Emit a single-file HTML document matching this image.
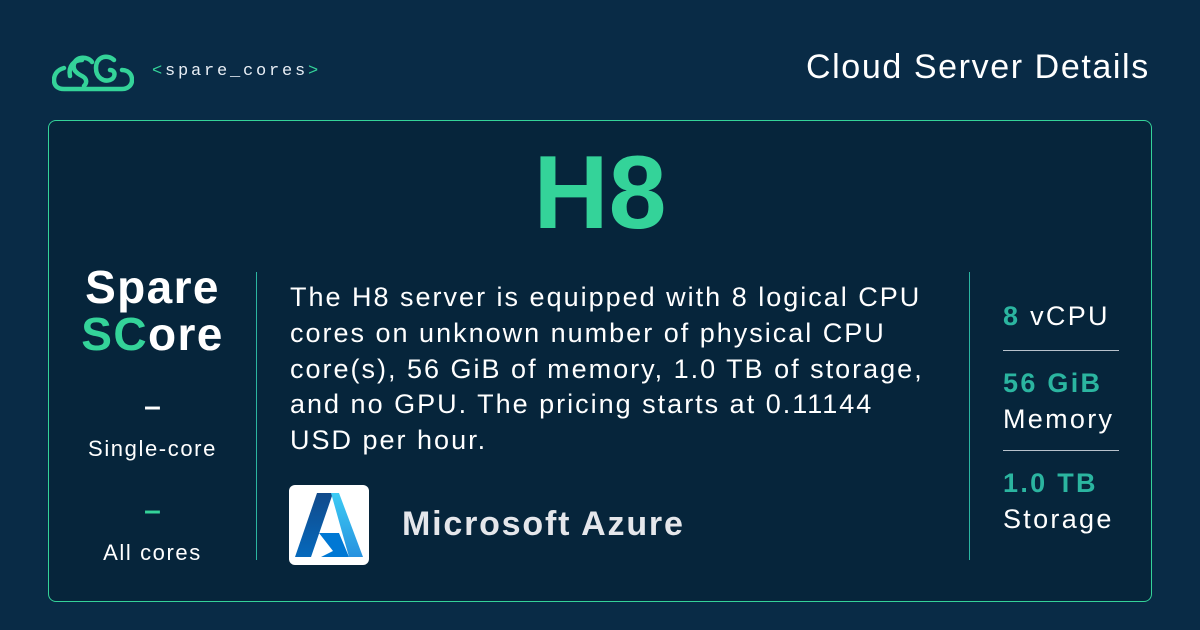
<!DOCTYPE html>
<html><head><meta charset="utf-8"><style>
*{margin:0;padding:0;box-sizing:border-box}
body{width:1200px;height:630px;background:#092b46;font-family:"Liberation Sans",sans-serif;color:#fff;position:relative;overflow:hidden}
.a{position:absolute;white-space:nowrap}
.card{position:absolute;left:48px;top:120px;width:1104px;height:482px;border:1.5px solid #34d399;border-radius:8px;background:#06253b}
.g{color:#34d399}.t{color:#2bb5a0}
</style></head><body>
<svg class="a" style="left:52px;top:52px" width="82" height="40" viewBox="0 0 82 40" fill="none" stroke="#34d399" stroke-width="4.5" stroke-linecap="round">
<path d="M12 16 C4 18 2 24 2 28 C2 34 6 37 12 37 L70 37 C76 37 80 33 80 28 C80 22 76 18 70 18"/>
<path d="M40 10 C36 4 24 4 22 12 C20 18 26 22 30 24 C34 26 36 30 32 34"/>
<path d="M30 8 C22 8 16 14 18 24"/>
<path d="M62 8 C56 2 44 4 44 16 C44 26 52 30 58 28 C64 26 64 18 58 18"/>
</svg>
<div class="a" style="left:152px;top:62px;font-family:'Liberation Mono',monospace;font-size:17px;letter-spacing:2.8px;color:#e8eef5"><span class="g">&lt;</span>spare_cores<span class="g">&gt;</span></div>
<div class="a" style="left:806px;top:48px;font-size:34px;letter-spacing:1.6px;color:#fff">Cloud Server Details</div>
<div class="card"></div>
<div class="a" style="left:0;width:1200px;text-align:center;top:134px;font-size:104px;font-weight:bold;color:#34d399">H8</div>
<div class="a" style="left:50px;width:205px;text-align:center;top:264px;font-size:46px;font-weight:bold;line-height:47px;letter-spacing:1.4px">Spare<br><span class="g">SC</span>ore</div>
<div class="a" style="left:50px;width:205px;text-align:center;top:390px;font-size:30px;font-weight:bold">–</div>
<div class="a" style="left:50px;width:205px;text-align:center;top:436px;font-size:22px;letter-spacing:1.6px">Single-core</div>
<div class="a g" style="left:50px;width:205px;text-align:center;top:494px;font-size:30px;font-weight:bold">–</div>
<div class="a" style="left:50px;width:205px;text-align:center;top:540px;font-size:22px;letter-spacing:1.6px">All cores</div>
<div class="a" style="left:256px;top:272px;width:1px;height:288px;background:#2bb5a0"></div>
<div class="a" style="left:969px;top:272px;width:1px;height:288px;background:#2bb5a0"></div>
<div class="a" style="left:290px;top:280px;font-size:27px;letter-spacing:2px;line-height:35.8px;white-space:normal;width:650px">The H8 server is equipped with 8 logical CPU cores on unknown number of physical CPU core(s), 56 GiB of memory, 1.0 TB of storage, and no GPU. The pricing starts at 0.11144 USD per hour.</div>
<div class="a" style="left:289px;top:485px;width:80px;height:80px;background:#fff;border-radius:6px"></div>
<svg class="a" style="left:293px;top:491px" width="72" height="68" viewBox="0 0 72 68">
<defs><linearGradient id="l" x1="0" y1="0" x2="0" y2="1"><stop offset="0" stop-color="#114a8b"/><stop offset="1" stop-color="#0669bc"/></linearGradient>
<linearGradient id="r" x1="0" y1="0" x2="0" y2="1"><stop offset="0" stop-color="#3ccbf4"/><stop offset="1" stop-color="#2892df"/></linearGradient></defs>
<path d="M24 2 L40 2 L18 66 L2 66 Z" fill="url(#l)"/>
<path d="M38 2 L46 2 L70 66 L56 66 Z" fill="url(#r)"/>
<path d="M26 42 L46 42 L56 66 L28 66 L40 60 Z" fill="#0078d4"/>
</svg>
<div class="a" style="left:402px;top:505px;font-size:34px;font-weight:bold;letter-spacing:1.8px;color:#e5e7eb">Microsoft Azure</div>
<div class="a" style="left:1003px;top:301px;font-size:27px;letter-spacing:2.3px"><b class="t">8</b> vCPU</div>
<div class="a" style="left:1003px;top:350px;width:116px;height:1px;background:#b8c2cc"></div>
<div class="a" style="left:1003px;top:365px;font-size:27px;line-height:36px;letter-spacing:2.3px"><b class="t">56 GiB</b><br>Memory</div>
<div class="a" style="left:1003px;top:450px;width:116px;height:1px;background:#b8c2cc"></div>
<div class="a" style="left:1003px;top:465px;font-size:27px;line-height:36px;letter-spacing:2.3px"><b class="t">1.0 TB</b><br>Storage</div>
</body></html>
